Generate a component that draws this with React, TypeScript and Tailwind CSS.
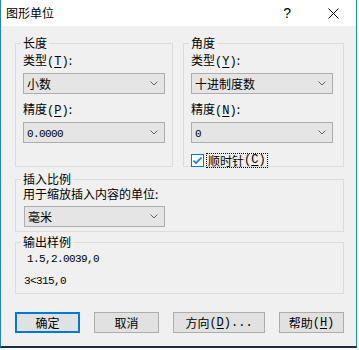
import React from 'react';

const mono = "font-['Liberation_Mono','Noto_Sans_CJK_SC',monospace]";

// underlined access key, the way Windows dialogs draw it
const Key: React.FC<{ k: string }> = ({ k }) => (
  <span className={mono}>
    (<span className="underline underline-offset-2">{k}</span>)
  </span>
);

const Chevron = () => (
  <svg width="8" height="5" viewBox="0 0 8 5" className="shrink-0">
    <path d="M0.5 0.5 L4 4 L7.5 0.5" fill="none" stroke="#606060" strokeWidth="1" />
  </svg>
);

const Combo: React.FC<{ value: React.ReactNode; className?: string }> = ({ value, className = '' }) => (
  <div className={`h-[21px] bg-[#e5e5e5] border border-[#adadad] flex items-center justify-between pl-[3px] pr-[6px] ${className}`}>
    <span className="leading-[14px]">{value}</span>
    <Chevron />
  </div>
);

const Num: React.FC<{ children: React.ReactNode }> = ({ children }) => (
  <span className={`${mono} text-[11px] tracking-[-0.6px]`}>{children}</span>
);

const Group: React.FC<{ title: string; className?: string; inner?: string; children: React.ReactNode }> = ({
  title,
  className = '',
  inner = '',
  children,
}) => (
  <fieldset className={`border border-[#dcdcdc] ${className}`}>
    <legend className="ml-[5px] px-[2px] leading-[14px]">{title}</legend>
    <div className={inner}>{children}</div>
  </fieldset>
);

const Btn: React.FC<{ children: React.ReactNode; w?: string; focus?: boolean }> = ({ children, w = 'w-[65px]', focus }) => (
  <button
    className={`${w} h-[21px] bg-[#e1e1e1] flex items-center justify-center leading-[14px] ${
      focus ? 'border-2 border-[#0078d7]' : 'border border-[#adadad]'
    }`}
  >
    {children}
  </button>
);

export default function App() {
  return (
    <div className="w-[357px] h-[348px] bg-white border-l border-r border-[#1a84d9] border-b-2 border-b-[#1f2d45] flex flex-col text-[12px] text-black font-['Noto_Sans_CJK_SC',sans-serif]">
      {/* title bar */}
      <div className="h-[26px] shrink-0 bg-white flex items-center pl-[5px]">
        <span className="leading-[14px] flex-1">图形单位</span>
        <span className="font-['Liberation_Sans',sans-serif] text-[14px] leading-[14px] mr-[37px]">?</span>
        <svg width="11" height="11" viewBox="0 0 11 11" className="mr-[17px]">
          <path d="M0.5 0.5 L10.5 10.5 M10.5 0.5 L0.5 10.5" stroke="#000" strokeWidth="1" />
        </svg>
      </div>

      {/* body */}
      <div className="flex-1 bg-[#f0f0f0] pl-[14px] pt-[10px] flex flex-col">
        <div className="flex gap-[10px]">
          <Group title="长度" className="w-[158px] h-[131px]" inner="px-[7px] pt-[3px]">
            <div className="leading-[14px]">类型<Key k="T" />:</div>
            <Combo value="小数" className="mt-[4px]" />
            <div className="leading-[14px] mt-[8px]">精度<Key k="P" />:</div>
            <Combo value={<Num>0.0000</Num>} className="mt-[4px]" />
          </Group>

          <Group title="角度" className="w-[161px] h-[131px]" inner="px-[7px] pt-[3px]">
            <div className="leading-[14px]">类型<Key k="Y" />:</div>
            <Combo value="十进制度数" className="mt-[4px] w-[142px]" />
            <div className="leading-[14px] mt-[8px]">精度<Key k="N" />:</div>
            <Combo value={<Num>0</Num>} className="mt-[4px] w-[142px]" />
            <div className="flex items-center mt-[10px] h-[15px]">
              <div className="w-[13px] h-[13px] bg-white border border-[#0078d7] flex items-center justify-center">
                <svg width="11" height="11" viewBox="0 0 11 11">
                  <path d="M1.5 5.5 L4 8 L9.5 2.5" fill="none" stroke="#0078d7" strokeWidth="1.6" />
                </svg>
              </div>
              <div className="ml-[2px] h-[15px] border border-dotted border-black flex items-center px-[1px] leading-[13px]">
                顺时针<Key k="C" />
              </div>
            </div>
          </Group>
        </div>

        <Group title="插入比例" className="w-[329px] h-[60px] mt-[5px]" inner="px-[7px] pt-[1px]">
          <div className="leading-[14px]">用于缩放插入内容的单位:</div>
          <Combo value="毫米" className="mt-[5px] ml-[1px] w-[141px]" />
        </Group>

        <Group title="输出样例" className="w-[329px] h-[59px] mt-[3px]" inner="pl-[11px] pt-[1px]">
          <div className="leading-[14px]"><Num>1.5,2.0039,0</Num></div>
          <div className="leading-[14px] mt-[6px] -ml-[3px]"><Num>3&lt;315,0</Num></div>
        </Group>

        <div className="flex gap-[14px] mt-[18px]">
          <Btn focus>确定</Btn>
          <Btn>取消</Btn>
          <Btn w="w-[92px]">
            方向<Key k="D" />
            <span className={mono}>...</span>
          </Btn>
          <Btn>
            帮助<Key k="H" />
          </Btn>
        </div>
      </div>
    </div>
  );
}
